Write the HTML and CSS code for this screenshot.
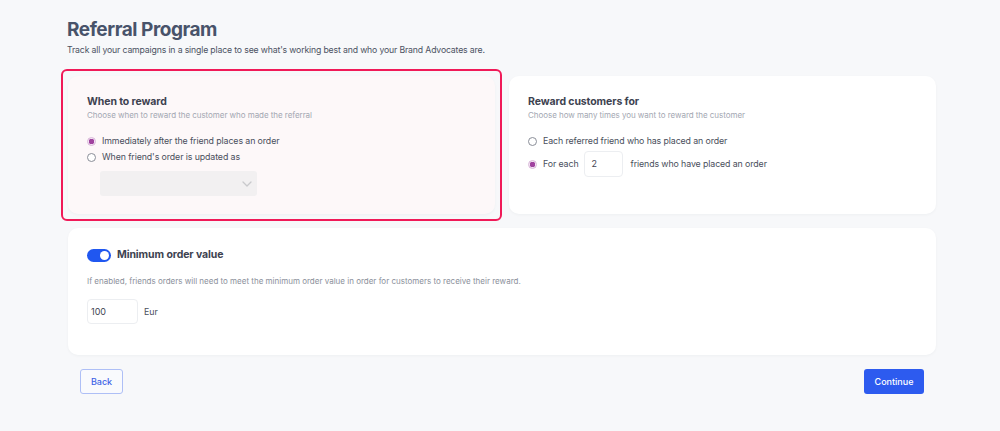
FILE: index.html
```html
<!DOCTYPE html>
<html>
<head>
<meta charset="utf-8">
<link rel="stylesheet" href="styles.css">
</head>
<body>
<div class="page">
  <header class="head">
    <h1 class="title">Referral Program</h1>
    <p class="lead">Track all your campaigns in a single place to see what's working best and who your Brand Advocates are.</p>
  </header>
  <div class="row">
    <div class="focus">
      <section class="card card-pink">
        <h2 class="card-title">When to reward</h2>
        <p class="card-sub">Choose when to reward the customer who made the referral</p>
        <div class="options">
          <label class="opt"><span class="radio on"></span>Immediately after the friend places an order</label>
          <label class="opt"><span class="radio"></span>When friend's order is updated as</label>
        </div>
        <div class="select">
          <svg class="chev" width="10" height="6" viewBox="0 0 10 6"><path d="M1 1l4 4 4-4" fill="none" stroke="#c9c9cc" stroke-width="1.3" stroke-linecap="round" stroke-linejoin="round"/></svg>
        </div>
      </section>
    </div>
    <section class="card side">
      <h2 class="card-title">Reward customers for</h2>
      <p class="card-sub">Choose how many times you want to reward the customer</p>
      <div class="options">
        <label class="opt"><span class="radio"></span>Each referred friend who has placed an order</label>
        <label class="opt opt-input"><span class="radio on"></span>For each<span class="field small">2</span>friends who have placed an order</label>
      </div>
    </section>
  </div>
  <section class="card card-wide">
    <div class="toggle-row">
      <span class="toggle"><span class="knob"></span></span>
      <h2 class="card-title inline">Minimum order value</h2>
    </div>
    <p class="desc">If enabled, friends orders will need to meet the minimum order value in order for customers to receive their reward.</p>
    <div class="amount">
      <span class="field wide">100</span><span class="unit">Eur</span>
    </div>
  </section>
  <footer class="actions">
    <button class="btn btn-back">Back</button>
    <button class="btn btn-primary">Continue</button>
  </footer>
</div>
</body>
</html>
```

FILE: styles.css
```css
* { box-sizing: border-box; }
html, body { margin: 0; padding: 0; }
body {
  background: #f7f8fa;
  font-family: Inter, "Noto Sans", sans-serif;
  color: #3f4553;
  width: 1000px;
  height: 431px;
  overflow: hidden;
}
.page {
  padding: 17px 64px 0 68px;
}
.head { margin-left: -1px; }
.title {
  margin: 0;
  font-size: 19px;
  font-weight: 700;
  color: #48536a;
  letter-spacing: -0.45px;
  line-height: 26px;
}
.lead {
  margin: 1px 0 0 0;
  font-size: 8.7px;
  color: #4b5262;
  letter-spacing: -0.15px;
  line-height: 12px;
}
.row {
  display: flex;
  gap: 14px;
  margin-top: 20px;
}
.card {
  background: #ffffff;
  border-radius: 10px;
  padding: 19px 19px 19px 19px;
  box-shadow: 0 1px 3px rgba(30, 40, 60, 0.04);
}
.focus {
  flex: 0 0 441px;
  margin: -7px;
  height: 152px;
  border: 2px solid #f01a58;
  border-radius: 6px;
  padding: 5px;
  display: flex;
}
.focus > .card {
  flex: 1;
  height: 138px;
}
.side {
  flex: 1 1 0;
  height: 138px;
}
.card-pink { background: #fdf8f9; }
.card-title {
  margin: 0;
  font-size: 10.5px;
  font-weight: 700;
  color: #3d4250;
  line-height: 14px;
  letter-spacing: -0.1px;
}
.card-sub {
  margin: 1px 0 0 0;
  font-size: 8px;
  color: #a3a7b2;
  line-height: 11px;
  letter-spacing: -0.05px;
}
.options {
  margin-top: 14px;
  display: flex;
  flex-direction: column;
  gap: 4px;
}
.opt {
  display: flex;
  align-items: center;
  font-size: 8.8px;
  color: #4a4f5c;
  line-height: 12px;
  letter-spacing: -0.1px;
}
.radio {
  width: 9px;
  height: 9px;
  border-radius: 50%;
  border: 1px solid #8a8e98;
  margin-right: 6px;
  flex: none;
  background: #fff;
}
.radio.on {
  border-color: #d9b7d9;
  background: radial-gradient(circle, #a0439f 0 2.6px, #f3e6f3 3px);
}
.opt-input { margin-top: 0; }
.field {
  display: inline-flex;
  align-items: center;
  background: #fff;
  border: 1px solid #eceef1;
  border-radius: 4px;
  font-size: 9px;
  color: #3f4553;
  padding-left: 7px;
}
.field.small {
  width: 39px;
  height: 26px;
  margin: 0 8px 0 5px;
}
.select {
  margin: 8px 0 0 13px;
  width: 157px;
  height: 25px;
  background: #f2f0f1;
  border-radius: 3px;
  display: flex;
  align-items: center;
  justify-content: flex-end;
  padding-right: 5px;
}
.card-wide {
  margin-top: 14px;
  height: 127px;
  padding: 20px 19px;
}
.toggle-row {
  display: flex;
  align-items: center;
  gap: 6px;
}
.toggle {
  width: 24px;
  height: 13px;
  border-radius: 7px;
  background: #2057f0;
  position: relative;
  flex: none;
}
.knob {
  position: absolute;
  right: 2px;
  top: 2px;
  width: 9px;
  height: 9px;
  border-radius: 50%;
  background: #fff;
}
.desc {
  margin: 14px 0 0 0;
  font-size: 8px;
  color: #8b909b;
  line-height: 11px;
  letter-spacing: 0;
}
.amount {
  margin-top: 12px;
  display: flex;
  align-items: center;
}
.field.wide {
  width: 51px;
  height: 25px;
  padding-left: 3px;
  font-size: 9px;
}
.unit {
  margin-left: 6px;
  font-size: 8.8px;
  color: #4a4f5c;
}
.actions {
  display: flex;
  justify-content: space-between;
  padding: 0 12px;
  margin-top: 14px;
}
.btn {
  font-family: Inter, "Noto Sans", sans-serif;
  font-size: 9px;
  height: 25px;
  border-radius: 3px;
  cursor: pointer;
}
.btn-back {
  width: 43px;
  background: #f9fafd;
  border: 1px solid #aebff6;
  color: #3d63e6;
  font-weight: 500;
}
.btn-primary {
  width: 60px;
  background: #2d5bef;
  border: none;
  color: #fff;
  font-weight: 500;
}
```
